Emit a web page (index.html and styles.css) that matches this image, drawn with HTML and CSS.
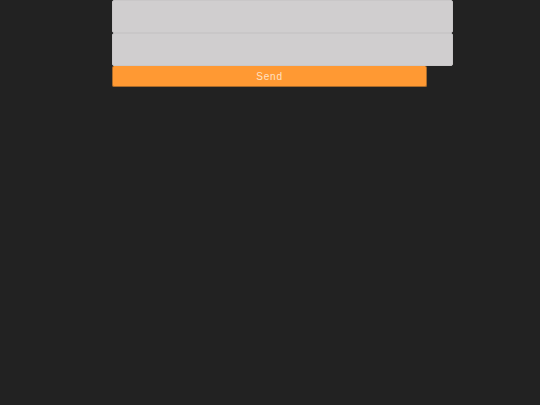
FILE: index.html
```html
<!DOCTYPE html>
<html>
<head>
<meta charset="utf-8">
<link rel="stylesheet" href="styles.css">
</head>
<body>
<form class="form">
  <input class="field" type="text">
  <input class="field" type="text">
  <button class="send" type="button">Send</button>
</form>
</body>
</html>
```
FILE: styles.css
```css
html, body {
  margin: 0;
  padding: 0;
  background: #222222;
  height: 100%;
}
.form {
  display: flex;
  flex-direction: column;
  align-items: flex-start;
  padding-left: 112px;
}
.field {
  box-sizing: border-box;
  width: 341px;
  height: 33px;
  margin: 0;
  background: #d0cecf;
  border: 1px solid #c9c7c8;
  border-radius: 2px;
  outline: none;
}
.send {
  box-sizing: border-box;
  width: 315px;
  height: 21px;
  margin: 0;
  padding: 1px 0 0;
  background: #ff9933;
  border: 1px solid #a86a2a;
  border-top: none;
  border-radius: 2px;
  color: #ffe2c4;
  font-family: "Liberation Sans", Arial, sans-serif;
  font-size: 10px;
  letter-spacing: 0.8px;
}
```
